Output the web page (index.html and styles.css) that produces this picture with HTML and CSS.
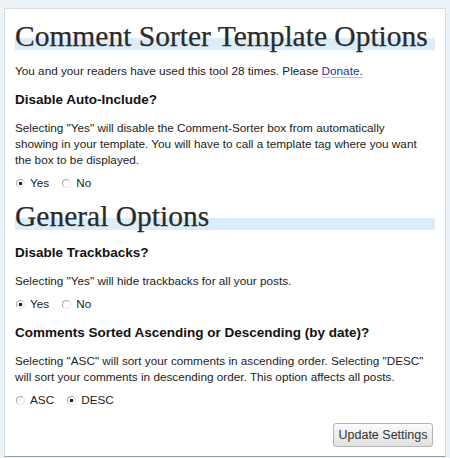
FILE: index.html
```html
<!DOCTYPE html>
<html>
<head>
<meta charset="utf-8">
<title>Comment Sorter Template Options</title>
<link rel="stylesheet" href="styles.css">
</head>
<body>
<div class="wrap">
  <h2 class="title">Comment Sorter Template Options</h2>
  <p class="intro">You and your readers have used this tool 28 times. Please <a href="#">Donate.</a></p>

  <h3>Disable Auto-Include?</h3>
  <p>Selecting "Yes" will disable the Comment-Sorter box from automatically<br>showing in your template. You will have to call a template tag where you want<br>the box to be displayed.</p>
  <div class="choices">
    <label class="choice"><span class="radio on"></span>Yes</label>
    <label class="choice"><span class="radio"></span>No</label>
  </div>

  <h2 class="title">General Options</h2>

  <h3>Disable Trackbacks?</h3>
  <p>Selecting "Yes" will hide trackbacks for all your posts.</p>
  <div class="choices">
    <label class="choice"><span class="radio on"></span>Yes</label>
    <label class="choice"><span class="radio"></span>No</label>
  </div>

  <h3>Comments Sorted Ascending or Descending (by date)?</h3>
  <p>Selecting "ASC" will sort your comments in ascending order. Selecting "DESC"<br>will sort your comments in descending order. This option affects all posts.</p>
  <div class="choices">
    <label class="choice"><span class="radio"></span>ASC</label>
    <label class="choice"><span class="radio on"></span>DESC</label>
  </div>

  <div class="actions">
    <button class="btn" type="button">Update Settings</button>
  </div>
</div>
</body>
</html>
```

FILE: styles.css
```css
html, body {
  background: #ebf3f9;
}
body {
  margin: 0;
  padding: 8px 4px 0 4px;
  height: 458px;
  box-sizing: border-box;
  overflow: hidden;
  font-family: "Liberation Sans", Arial, sans-serif;
  font-size: 11.75px;
  color: #222;
}
.wrap {
  background: #fff;
  border: 1px solid #d3dee7;
  border-bottom: 1px solid #9c9c9c;
  box-sizing: border-box;
  height: 449px;
  padding: 0 10px 0 10px;
}
.title {
  font-family: "Liberation Serif", "Times New Roman", serif;
  font-weight: normal;
  font-size: 29.5px;
  line-height: 34px;
  height: 34px;
  color: #2a2a2a;
  -webkit-text-stroke: 0.25px #2a2a2a;
  margin: 10px 0 0 0;
  white-space: nowrap;
  background: linear-gradient(to bottom, transparent 19px, #dcedf9 19px, #dcedf9 31px, transparent 31px);
}
.wrap .title + h3 {
  margin-top: 11px;
}
.title ~ .title {
  margin-top: 8px;
}
p {
  margin: 11px 0 0 0;
  line-height: 16px;
  white-space: nowrap;
}
.intro {
  margin-top: 10px;
}
a {
  color: #23329a;
  text-decoration: none;
  border-bottom: 1px solid #a9c6e3;
}
h3 {
  font-size: 13.5px;
  font-weight: bold;
  line-height: 18px;
  margin: 12px 0 0 0;
  color: #111;
}
.choices {
  display: flex;
  gap: 12px;
  margin-top: 7px;
  line-height: 16px;
}
.choice {
  display: flex;
  align-items: center;
  gap: 5px;
}
.radio {
  width: 7px;
  height: 7px;
  border-radius: 50%;
  border: 1px solid #a8a8a8;
  border-right-color: #e8e8e8;
  border-bottom-color: #e8e8e8;
  background: #fff;
  box-sizing: content-box;
  margin-left: 1px;
}
.radio.on {
  background: radial-gradient(circle, #222 0 1.5px, #fff 2.1px);
}
.actions {
  display: flex;
  justify-content: flex-end;
  margin-top: 15px;
  padding-right: 2px;
}
.btn {
  font-family: "Liberation Sans", Arial, sans-serif;
  font-size: 12.5px;
  color: #333;
  width: 100px;
  height: 24px;
  padding: 0;
  border: 1px solid #b4b4b4;
  border-radius: 3px;
  background: linear-gradient(to bottom, #fcfcfc, #e0e0e0);
}
```
